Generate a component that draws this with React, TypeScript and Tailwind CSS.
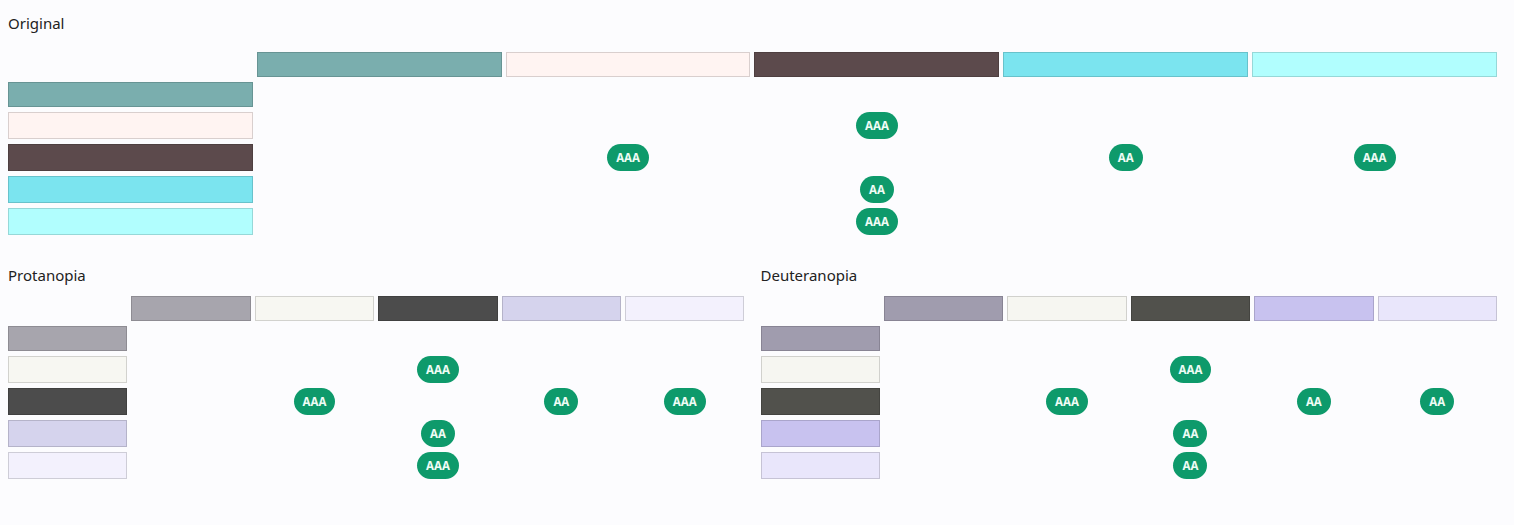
import React from "react";

type Badge = "AA" | "AAA" | null;

const font = { fontFamily: '"Noto Sans", "Liberation Sans", sans-serif' };

function Swatch({ color }: { color: string }) {
  return (
    <div
      className="min-h-[25px] h-full w-full border border-black/15"
      style={{ backgroundColor: color }}
    />
  );
}

function Pill({ level }: { level: Badge }) {
  if (!level) return null;
  return (
    <span className="inline-flex h-[27px] items-center justify-center rounded-full bg-[#0e9a6b] px-[9px] text-[11.5px] font-bold leading-none text-[#eefcf5]">
      {level}
    </span>
  );
}

function Matrix({
  title,
  colors,
  badges,
  titleGap,
}: {
  title: string;
  colors: string[];
  badges: Badge[][];
  titleGap: string;
}) {
  return (
    <div className="flex flex-col">
      <div className={`text-[15px] leading-5 text-[#222] ${titleGap}`}>{title}</div>
      <div className="grid grid-cols-6 gap-x-[4px] gap-y-[5px]">
        <div />
        {colors.map((c, i) => (
          <Swatch key={"h" + i} color={c} />
        ))}
        {colors.map((rc, r) => (
          <React.Fragment key={"r" + r}>
            <Swatch color={rc} />
            {colors.map((_, c) => (
              <div key={c} className="flex items-center justify-center">
                <Pill level={badges[r][c]} />
              </div>
            ))}
          </React.Fragment>
        ))}
      </div>
    </div>
  );
}

const n = null;

export default function App() {
  return (
    <div className="min-h-[525px] w-full bg-[#fcfcfe]" style={font}>
      <div className="ml-2 w-[1489px] pt-[13px]">
        <Matrix
          title="Original"
          titleGap="mb-[19px]"
          colors={["#7aaeae", "#fff4f2", "#5c4a4c", "#7be4ef", "#b1fefe"]}
          badges={[
            [n, n, n, n, n],
            [n, n, "AAA", n, n],
            [n, "AAA", n, "AA", "AAA"],
            [n, n, "AA", n, n],
            [n, n, "AAA", n, n],
          ]}
        />
        <div className="mt-[30px] flex gap-4">
          <div className="flex-1">
            <Matrix
              title="Protanopia"
              titleGap="mb-[11px]"
              colors={["#a7a5ad", "#f7f7f2", "#4c4c4c", "#d5d3ed", "#f3f1fd"]}
              badges={[
                [n, n, n, n, n],
                [n, n, "AAA", n, n],
                [n, "AAA", n, "AA", "AAA"],
                [n, n, "AA", n, n],
                [n, n, "AAA", n, n],
              ]}
            />
          </div>
          <div className="flex-1">
            <Matrix
              title="Deuteranopia"
              titleGap="mb-[11px]"
              colors={["#a09cae", "#f6f6f1", "#51514c", "#c8c2ef", "#e9e6fb"]}
              badges={[
                [n, n, n, n, n],
                [n, n, "AAA", n, n],
                [n, "AAA", n, "AA", "AA"],
                [n, n, "AA", n, n],
                [n, n, "AA", n, n],
              ]}
            />
          </div>
        </div>
      </div>
    </div>
  );
}
